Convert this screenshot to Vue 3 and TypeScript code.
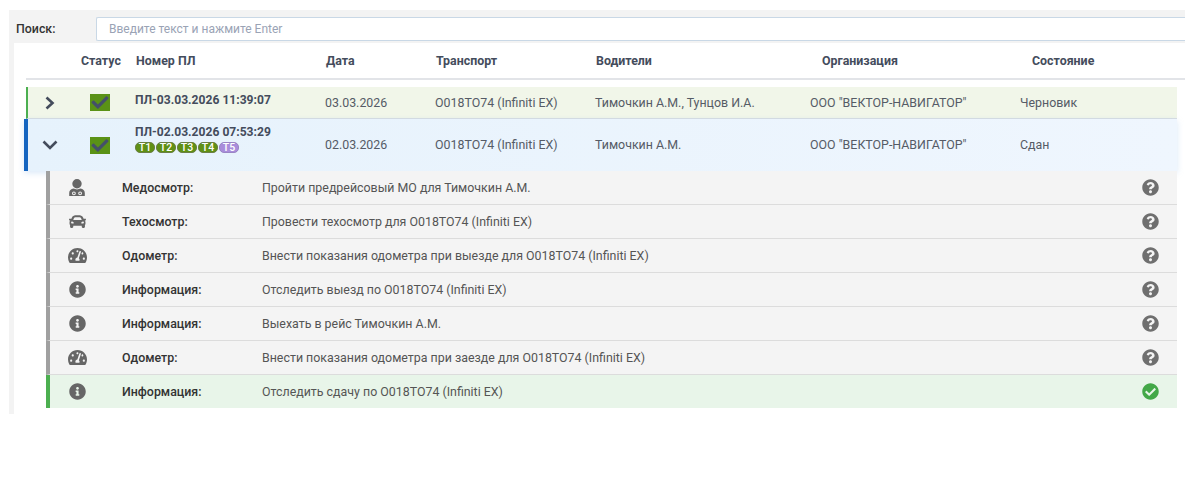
<script setup lang="ts">
type IconName = 'doctor' | 'car' | 'gauge' | 'info'
interface Step { icon: IconName; label: string; text: string; done?: boolean }

const paths: Record<string, { box: string; d: string }> = {
  car: { box: '0 0 512 512', d: 'M499.99 176h-59.87l-16.64-41.6C406.38 91.63 365.57 64 319.5 64h-127c-46.06 0-86.88 27.63-103.99 70.4L71.87 176H12.01C4.2 176-1.53 183.34.37 190.91l6 24C7.7 220.25 12.5 224 18.01 224h20.07C24.65 235.73 16 252.78 16 272v48c0 16.12 6.16 30.67 16 41.93V416c0 17.67 14.33 32 32 32h32c17.67 0 32-14.33 32-32v-32h256v32c0 17.67 14.33 32 32 32h32c17.67 0 32-14.33 32-32v-54.07c9.84-11.25 16-25.8 16-41.93v-48c0-19.22-8.65-36.27-22.07-48H494c5.51 0 10.31-3.75 11.64-9.09l6-24c1.89-7.57-3.84-14.91-11.65-14.91zm-352.06-17.83c7.29-18.22 24.94-30.17 44.57-30.17h127c19.63 0 37.28 11.95 44.57 30.17L384 208H128l19.93-49.83zM96 319.8c-19.2 0-32-12.76-32-31.9S76.8 256 96 256s48 28.71 48 47.85-28.8 15.95-48 15.95zm320 0c-19.2 0-48 3.19-48-15.95S396.8 256 416 256s32 12.76 32 31.9-12.8 31.9-32 31.9z' },
  gauge: { box: '0 0 576 512', d: 'M288 32C128.94 32 0 160.94 0 320c0 52.8 14.25 102.26 39.06 144.8 5.61 9.62 16.3 15.2 27.44 15.2h443c11.14 0 21.83-5.58 27.44-15.2C561.75 422.26 576 372.8 576 320c0-159.06-128.94-288-288-288zm0 64c14.71 0 26.58 10.13 30.32 23.65-1.11 2.26-2.64 4.23-3.45 6.67l-9.22 27.67c-5.13 3.49-10.97 6.01-17.64 6.01-17.67 0-32-14.33-32-32S270.33 96 288 96zM96 384c-17.67 0-32-14.33-32-32s14.33-32 32-32 32 14.33 32 32-14.33 32-32 32zm48-160c-17.67 0-32-14.33-32-32s14.33-32 32-32 32 14.33 32 32-14.33 32-32 32zm246.77-72.41l-61.33 184C343.13 347.33 352 364.54 352 384c0 11.72-3.38 22.55-8.88 32H232.88c-5.5-9.45-8.88-20.28-8.88-32 0-33.94 26.5-61.43 59.9-63.59l61.34-184.01c4.17-12.56 17.73-19.45 30.36-15.17 12.57 4.19 19.35 17.79 15.17 30.36zm14.66 57.2l15.52-46.55c3.47-1.29 7.13-2.23 11.05-2.23 17.67 0 32 14.33 32 32s-14.33 32-32 32c-11.38-.01-20.89-6.28-26.57-15.22zM480 384c-17.67 0-32-14.33-32-32s14.33-32 32-32 32 14.33 32 32-14.33 32-32 32z' },
  info: { box: '0 0 512 512', d: 'M256 8C119.043 8 8 119.083 8 256c0 136.997 111.043 248 248 248s248-111.003 248-248C504 119.083 392.957 8 256 8zm0 110c23.196 0 42 18.804 42 42s-18.804 42-42 42-42-18.804-42-42 18.804-42 42-42zm56 254c0 6.627-5.373 12-12 12h-88c-6.627 0-12-5.373-12-12v-24c0-6.627 5.373-12 12-12h12v-64h-12c-6.627 0-12-5.373-12-12v-24c0-6.627 5.373-12 12-12h64c6.627 0 12 5.373 12 12v100h12c6.627 0 12 5.373 12 12v24z' },
  doctor: { box: '0 0 16 17', d: 'M8 0a4.7 4.7 0 1 0 0 9.4A4.7 4.7 0 1 0 8 0zM4.5 9.6C2 10 .2 11.6.2 14v3h15.6v-3c0-2.4-1.8-4-4.3-4.4L8 10.4zM4.9 12.4a1.9 1.9 0 1 1 0 3.8 1.9 1.9 0 1 1 0-3.8zM4.9 13.4a.9.9 0 1 0 0 1.8.9.9 0 1 0 0-1.8zM11.1 12.4a1.9 1.9 0 1 1 0 3.8 1.9 1.9 0 1 1 0-3.8zM11.1 13.4a.9.9 0 1 0 0 1.8.9.9 0 1 0 0-1.8z' }
}

const questionPath = 'M504 256c0 136.997-111.043 248-248 248S8 392.997 8 256C8 119.083 119.043 8 256 8s248 111.083 248 248zM262.655 90c-54.497 0-89.255 22.957-116.549 63.758-3.536 5.286-2.353 12.415 2.715 16.258l34.699 26.31c5.205 3.947 12.621 3.008 16.665-2.122 17.864-22.658 30.113-35.797 57.303-35.797 20.429 0 45.698 13.148 45.698 32.958 0 14.976-12.363 22.667-32.534 33.976C247.128 238.528 216 254.941 216 296v4c0 6.627 5.373 12 12 12h56c6.627 0 12-5.373 12-12v-1.333c0-28.462 83.186-29.647 83.186-106.667 0-58.002-60.165-102-116.531-102zM256 338c-25.365 0-46 20.635-46 46 0 25.364 20.635 46 46 46s46-20.636 46-46c0-25.365-20.635-46-46-46z'
const checkPath = 'M504 256c0 136.967-111.033 248-248 248S8 392.967 8 256 119.033 8 256 8s248 111.033 248 248zM227.314 387.314l184-184c6.248-6.248 6.248-16.379 0-22.627l-22.627-22.627c-6.248-6.249-16.379-6.249-22.628 0L216 308.118l-70.059-70.059c-6.248-6.248-16.379-6.248-22.628 0l-22.627 22.627c-6.248 6.248-6.248 16.379 0 22.627l104 104c6.249 6.249 16.379 6.249 22.628.001z'
const tickPath = 'M173.898 439.404l-166.4-166.4c-9.997-9.997-9.997-26.206 0-36.204l36.203-36.204c9.997-9.998 26.207-9.998 36.204 0L192 312.69 432.095 72.596c9.997-9.997 26.207-9.997 36.204 0l36.203 36.204c9.997 9.997 9.997 26.206 0 36.204l-294.4 294.401c-9.998 9.997-26.207 9.997-36.204-.001z'

const headers = ['Статус', 'Номер ПЛ', 'Дата', 'Транспорт', 'Водители', 'Организация', 'Состояние']
const tags = ['Т1', 'Т2', 'Т3', 'Т4']

const steps: Step[] = [
  { icon: 'doctor', label: 'Медосмотр:', text: 'Пройти предрейсовый МО для Тимочкин А.М.' },
  { icon: 'car', label: 'Техосмотр:', text: 'Провести техосмотр для О018ТО74 (Infiniti EX)' },
  { icon: 'gauge', label: 'Одометр:', text: 'Внести показания одометра при выезде для О018ТО74 (Infiniti EX)' },
  { icon: 'info', label: 'Информация:', text: 'Отследить выезд по О018ТО74 (Infiniti EX)' },
  { icon: 'info', label: 'Информация:', text: 'Выехать в рейс Тимочкин А.М.' },
  { icon: 'gauge', label: 'Одометр:', text: 'Внести показания одометра при заезде для О018ТО74 (Infiniti EX)' },
  { icon: 'info', label: 'Информация:', text: 'Отследить сдачу по О018ТО74 (Infiniti EX)', done: true }
]
</script>

<template>
  <div class="panel">
    <div class="search">
      <label class="search-label">Поиск:</label>
      <input class="search-input" type="text" placeholder="Введите текст и нажмите Enter" />
    </div>
    <div class="content">
      <div class="head">
        <span v-for="h in headers" :key="h">{{ h }}</span>
      </div>

      <div class="row row-draft">
        <div class="toggle">
          <svg width="12" height="14" viewBox="0 0 12 14"><path d="M2.5 1.5 8.5 7l-6 5.5" fill="none" stroke="#444c5c" stroke-width="2.6" /></svg>
        </div>
        <div class="status">
          <svg width="20" height="17" viewBox="0 0 20 17"><rect width="20" height="17" fill="#5a9216" /><path :d="tickPath" fill="#445069" transform="translate(1.5 0) scale(.0332)" /></svg>
        </div>
        <div class="name name-top">ПЛ-03.03.2026 11:39:07</div>
        <div>03.03.2026</div>
        <div>О018ТО74 (Infiniti EX)</div>
        <div>Тимочкин А.М., Тунцов И.А.</div>
        <div>ООО "ВЕКТОР-НАВИГАТОР"</div>
        <div>Черновик</div>
      </div>

      <div class="row row-open">
        <div class="toggle">
          <svg width="16" height="12" viewBox="0 0 16 12"><path d="M1.5 2.5 8 9l6.5-6.5" fill="none" stroke="#444c5c" stroke-width="2.6" /></svg>
        </div>
        <div class="status">
          <svg width="20" height="17" viewBox="0 0 20 17"><rect width="20" height="17" fill="#5a9216" /><path :d="tickPath" fill="#445069" transform="translate(1.5 0) scale(.0332)" /></svg>
        </div>
        <div class="name-cell">
          <div class="name">ПЛ-02.03.2026 07:53:29</div>
          <div class="tags">
            <span v-for="t in tags" :key="t" class="tag">{{ t }}</span>
            <span class="tag tag-purple">Т5</span>
          </div>
        </div>
        <div class="cell-up">02.03.2026</div>
        <div class="cell-up">О018ТО74 (Infiniti EX)</div>
        <div class="cell-up">Тимочкин А.М.</div>
        <div class="cell-up">ООО "ВЕКТОР-НАВИГАТОР"</div>
        <div class="cell-up">Сдан</div>
      </div>

      <div class="steps">
        <div v-for="(s, i) in steps" :key="i" class="step" :class="{ 'step-done': s.done }">
          <div class="step-icon">
            <svg :viewBox="paths[s.icon].box" class="glyph" :class="'glyph-' + s.icon"><path :d="paths[s.icon].d" fill="#666" fill-rule="evenodd" /></svg>
          </div>
          <div class="step-label">{{ s.label }}</div>
          <div class="step-text">{{ s.text }}</div>
          <div class="step-state">
            <svg viewBox="0 0 512 512" class="glyph glyph-info"><path :d="s.done ? checkPath : questionPath" :fill="s.done ? '#43a848' : '#6f6f6f'" /></svg>
          </div>
        </div>
      </div>
    </div>
  </div>
</template>

<style>
html, body { margin: 0; background: #fff; }
</style>

<style scoped>
.panel {
  margin: 10px 15px 0 9px;
  background: #f3f3f3;
  font-family: Roboto, "Liberation Sans", sans-serif;
  font-size: 12.4px;
  color: #555b66;
}
.search {
  display: flex;
  align-items: center;
  height: 33px;
  padding-left: 7px;
  box-sizing: border-box;
  padding-top: 4px;
}
.search-label {
  width: 80px;
  flex: none;
  font-weight: 500;
  color: #333;
}
.search-input {
  flex: 1;
  min-width: 0;
  height: 24px;
  box-sizing: border-box;
  padding: 0 12px;
  border: 1px solid #c9d8e6;
  border-right: none;
  border-radius: 2px 0 0 2px;
  background: #fff;
  font: inherit;
  font-size: 12px;
  outline: none;
}
.search-input::placeholder { color: #9aa3b5; opacity: 1; }
.content {
  margin-left: 5px;
  padding: 0 0 6px 12px;
  background: #fff;
}
.head {
  display: grid;
  grid-template-columns: 55px 55px 190px 110px 160px 226px 210px 1fr;
  align-items: center;
  height: 37px;
  box-sizing: border-box;
  border-bottom: 2px solid #e2e4e8;
  margin-bottom: 7px;
  font-weight: 700;
  color: #444c5c;
}
.head span:first-child { grid-column: 2; }
.row {
  display: grid;
  grid-template-columns: 52px 55px 190px 110px 160px 215px 210px 1fr;
  align-items: center;
  margin-right: 8px;
  box-sizing: border-box;
}
.row-draft {
  height: 32px;
  border-left: 2px solid #4caf50;
  border-bottom: 1px solid #d8dde2;
  background: #f1f6e9;
}
.row-open {
  position: relative;
  height: 52px;
  margin-left: -2px;
  border-left: 4px solid #1565c0;
  background: linear-gradient(90deg, #e6f2fc, #eff6fe);
  box-shadow: 0 2px 6px rgba(150, 190, 235, 0.35);
}
.cell-up { padding-bottom: 2px; }
.toggle { display: flex; justify-content: center; padding-right: 8px; }
.toggle svg { display: block; }
.status { display: flex; justify-content: flex-start; padding-left: 10px; }
.status svg { display: block; }
.name { font-weight: 700; font-size: 12.1px; color: #444c5c; }
.name-top { margin-top: -5px; }
.name-cell { align-self: start; padding-top: 6px; }
.tags { display: flex; gap: 1px; margin-top: 3px; }
.tag {
  width: 20px;
  height: 11px;
  box-sizing: border-box;
  border: 1px solid #6a7f45;
  border-radius: 5px;
  background: #5f9015;
  color: #fff;
  font-size: 10.5px;
  font-weight: 500;
  line-height: 9px;
  text-align: center;
}
.tag-purple { background: #a98ddb; border-color: #9a85c4; }
.steps { margin: 0 8px 0 20px; position: relative; }
.step {
  display: grid;
  grid-template-columns: 72px 140px 1fr 54px;
  align-items: center;
  height: 34px;
  box-sizing: border-box;
  border-left: 4px solid #a0a0a0;
  border-bottom: 1px solid #dcdcdc;
  background: #f4f4f4;
}
.step-done {
  height: 33px;
  border-left-color: #4caf50;
  border-bottom: none;
  background: #e8f5e9;
}
.step-icon { display: flex; justify-content: center; padding-right: 18px; }
.step-label { font-weight: 500; color: #333; }
.step-text { color: #555; }
.step-state { display: flex; justify-content: center; }
.glyph { display: block; height: 17px; }
.glyph-doctor { width: 16px; }
.glyph-car { width: 17px; }
.glyph-gauge { width: 19px; }
.glyph-info { width: 17px; }
</style>
